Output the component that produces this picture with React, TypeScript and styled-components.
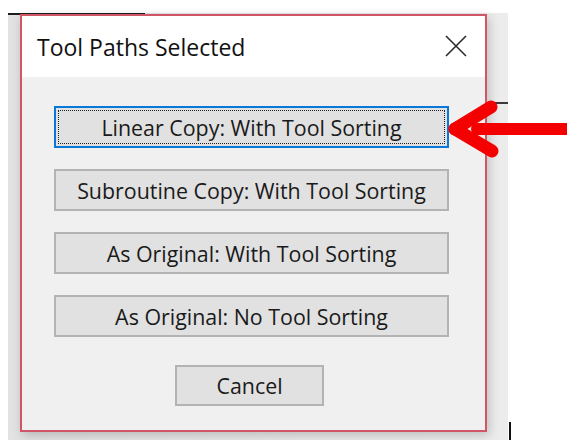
import React from "react";
import styled, { createGlobalStyle } from "styled-components";

const GlobalStyle = createGlobalStyle`
  html, body {
    margin: 0;
    padding: 0;
    background: #ffffff;
  }
  body {
    font-family: "Open Sans", "Noto Sans", "Liberation Sans", sans-serif;
  }
`;

const options = [
  "Linear Copy: With Tool Sorting",
  "Subroutine Copy: With Tool Sorting",
  "As Original: With Tool Sorting",
  "As Original: No Tool Sorting",
];

export default function App() {
  return (
    <>
      <GlobalStyle />
      <Page>
        <Capture>
          <Dialog>
            <TitleBar>
              <Title>Tool Paths Selected</Title>
              <CloseButton aria-label="Close">
                <svg width="22" height="22" viewBox="0 0 22 22">
                  <path d="M1 1 L21 21 M21 1 L1 21" stroke="#2b2b2b" strokeWidth="1.6" fill="none" />
                </svg>
              </CloseButton>
            </TitleBar>
            <Body>
              {options.map((label, i) => (
                <OptionButton key={label} focused={i === 0}>
                  <span>{label}</span>
                </OptionButton>
              ))}
              <Footer>
                <CancelButton>Cancel</CancelButton>
              </Footer>
            </Body>
          </Dialog>
        </Capture>
        <Pointer width="120" height="70" viewBox="0 0 120 70">
          <g stroke="#f50000" strokeLinecap="round" fill="none">
            <path d="M30 34 L125 34" strokeWidth="12" />
            <path d="M8 34 L44 12" strokeWidth="13" />
            <path d="M8 34 L45 56" strokeWidth="13" />
          </g>
        </Pointer>
      </Page>
    </>
  );
}

const Page = styled.div`
  position: relative;
  width: 567px;
  height: 440px;
  overflow: hidden;
  padding: 13px 0 0 8px;
  box-sizing: border-box;
  /* edge of the window behind, bottom right */
  background: linear-gradient(#111, #111) 509px 422px / 2px 18px no-repeat, #ffffff;
`;

const Capture = styled.div`
  width: 500px;
  height: 427px;
  box-sizing: border-box;
  padding: 1px 0 0 12px;
  background:
    linear-gradient(#1e1e1e, #1e1e1e) 0 0 / 137px 2px no-repeat,
    linear-gradient(#3a3a3a, #3a3a3a) 485px 89px / 15px 2px no-repeat,
    linear-gradient(90deg, #e2e2e2, #e9e9e9 60%, #ececec);
`;

const Dialog = styled.div`
  width: 467px;
  height: 418px;
  box-sizing: border-box;
  border: 2px solid #d05566;
  background: #f0f0f0;
  display: flex;
  flex-direction: column;
  box-shadow: 2px 3px 10px rgba(0, 0, 0, 0.2);
`;

const TitleBar = styled.div`
  height: 61px;
  flex-shrink: 0;
  background: #ffffff;
  display: flex;
  align-items: center;
  justify-content: space-between;
  padding: 0 18px 0 15px;
`;

const Title = styled.div`
  font-size: 23px;
  color: #111;
`;

const CloseButton = styled.div`
  width: 22px;
  height: 22px;
  display: flex;
  align-items: center;
  justify-content: center;
  margin-top: -2px;
`;

const Body = styled.div`
  flex: 1;
  display: flex;
  flex-direction: column;
  gap: 21px;
  padding: 29px 36px 0 32px;
`;

const ButtonBase = styled.div`
  box-sizing: border-box;
  background: #e1e1e1;
  border: 2px solid #b3b3b3;
  display: flex;
  align-items: center;
  justify-content: center;
  font-size: 21.4px;
  color: #1a1a1a;
`;

const OptionButton = styled(ButtonBase)<{ focused?: boolean }>`
  height: 42px;
  border-color: ${(p) => (p.focused ? "#0a78d8" : "#b3b3b3")};
  padding: 2px;

  span {
    flex: 1;
    align-self: stretch;
    display: flex;
    align-items: center;
    justify-content: center;
    outline: ${(p) => (p.focused ? "1px dotted #222" : "none")};
    outline-offset: -1px;
  }
`;

const Footer = styled.div`
  display: flex;
  justify-content: center;
  padding-top: 7px;
  padding-right: 4px;
`;

const CancelButton = styled(ButtonBase)`
  width: 149px;
  height: 41px;
`;

const Pointer = styled.svg`
  position: absolute;
  left: 447px;
  top: 95px;
  overflow: visible;
`;
